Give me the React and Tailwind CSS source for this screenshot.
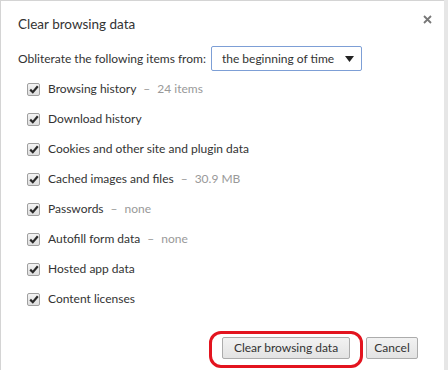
import React from 'react';

const items = [
  { label: 'Browsing history', extra: '24 items' },
  { label: 'Download history' },
  { label: 'Cookies and other site and plugin data' },
  { label: 'Cached images and files', extra: '30.9 MB' },
  { label: 'Passwords', extra: 'none' },
  { label: 'Autofill form data', extra: 'none' },
  { label: 'Hosted app data' },
  { label: 'Content licenses' },
];

const CheckBox = () => (
  <span className="w-[13px] h-[13px] flex items-center justify-center border border-[#a0a0a0] rounded-[2px] bg-gradient-to-b from-[#f4f4f4] to-[#dedede]">
    <svg width="10" height="9" viewBox="0 0 10 9">
      <path d="M1.2 4.6 L3.8 7.2 L8.8 1.2" fill="none" stroke="#2b2b2b" strokeWidth="2.2" />
    </svg>
  </span>
);

export default function App() {
  return (
    <div
      className="relative w-[448px] h-[370px] flex bg-white text-[#333] overflow-hidden"
      style={{ fontFamily: 'Lato, "Open Sans", sans-serif' }}
    >
      <div className="flex-1 border-l border-t border-[#d4d4d4] flex flex-col">
        <div className="flex items-start justify-between pl-[17px] pr-[12px] pt-[13px]">
          <h1 className="text-[13.5px] leading-[20px] text-[#333]">Clear browsing data</h1>
          <svg width="9" height="9" viewBox="0 0 9 9" className="mt-[1px]">
            <path d="M1 1 L8 8 M8 1 L1 8" stroke="#777" strokeWidth="1.8" />
          </svg>
        </div>

        <div className="flex items-center pl-[17px] mt-[12px]">
          <span className="text-[12px] text-[#333] whitespace-nowrap">Obliterate the following items from:</span>
          <div className="ml-[5px] w-[151px] h-[25px] border border-[#7d9fd6] rounded-[2px] flex items-center justify-between pl-[10px] pr-[7px] bg-white">
            <span className="text-[12px] text-[#333] whitespace-nowrap">the beginning of time</span>
            <svg width="9" height="6" viewBox="0 0 9 6">
              <path d="M0 0 L9 0 L4.5 6 Z" fill="#222" />
            </svg>
          </div>
        </div>

        <div className="flex flex-col pl-[26px] mt-[3px]">
          {items.map((it) => (
            <div key={it.label} className="h-[30px] flex items-center gap-[8px]">
              <CheckBox />
              <span className="text-[12px] text-[#333] whitespace-nowrap">
                {it.label}
                {it.extra && (
                  <span className="text-[#999]">
                    <span className="mx-[7px]">–</span>
                    {it.extra}
                  </span>
                )}
              </span>
            </div>
          ))}
        </div>

        <div className="mt-auto flex justify-end gap-[16px] pr-[26px] pb-[11px]">
          <button className="w-[128px] h-[22px] border border-[#acacac] rounded-[2px] bg-gradient-to-b from-[#f2f2f2] to-[#e3e3e3] text-[12px] text-[#333]">
            Clear browsing data
          </button>
          <button className="w-[52px] h-[22px] border border-[#acacac] rounded-[2px] bg-gradient-to-b from-[#f2f2f2] to-[#e3e3e3] text-[12px] text-[#333]">
            Cancel
          </button>
        </div>
      </div>
      <div className="w-[4px] bg-[#e6e6e6]" />

      <div className="absolute left-[209px] top-[331px] w-[154px] h-[37px] border-[3px] border-[#e3141f] rounded-[12px]" />
    </div>
  );
}
